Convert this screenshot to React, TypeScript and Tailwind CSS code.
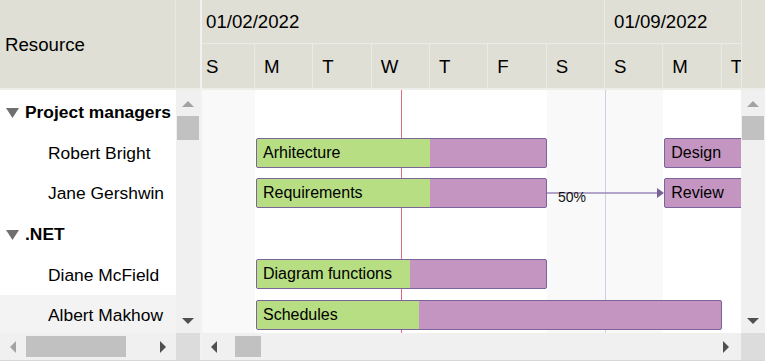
import React from "react";

const DAY = 58.33;
const ORIGIN = 53; // left offset of the first Monday inside the chart
const ROW = 40.6;

interface Task {
  name: string;
  row: number;
  start: number; // day index from first Monday
  days: number;
  progress: number;
}

const tasks: Task[] = [
  { name: "Arhitecture", row: 1, start: 0, days: 5, progress: 0.6 },
  { name: "Design", row: 1, start: 7, days: 5, progress: 0 },
  { name: "Requirements", row: 2, start: 0, days: 5, progress: 0.6 },
  { name: "Review", row: 2, start: 7, days: 5, progress: 0 },
  { name: "Diagram functions", row: 4, start: 0, days: 5, progress: 0.53 },
  { name: "Schedules", row: 5, start: 0, days: 8, progress: 0.35 },
];

const resources = [
  { name: "Project managers", group: true },
  { name: "Robert Bright" },
  { name: "Jane Gershwin" },
  { name: ".NET", group: true },
  { name: "Diane McField" },
  { name: "Albert Makhow", hover: true },
];

const days = [
  { d: "S", w: 53, weekend: true },
  { d: "M", w: DAY },
  { d: "T", w: DAY },
  { d: "W", w: DAY },
  { d: "T", w: DAY },
  { d: "F", w: DAY },
  { d: "S", w: DAY, weekend: true },
  { d: "S", w: DAY, weekend: true, weekStart: true },
  { d: "M", w: DAY },
  { d: "T", w: DAY },
];

function Tri({ dir, color }: { dir: "up" | "down" | "left" | "right"; color: string }) {
  const pts = {
    up: "0,8 6,2 12,8",
    down: "0,2 12,2 6,8",
    left: "8,0 8,12 2,6",
    right: "2,0 2,12 8,6",
  }[dir];
  const vertical = dir === "up" || dir === "down";
  return (
    <svg width={vertical ? 12 : 10} height={vertical ? 10 : 12} viewBox={vertical ? "0 0 12 10" : "0 0 10 12"}>
      <polygon points={pts} fill={color} />
    </svg>
  );
}

function VScroll() {
  return (
    <div className="w-[24px] bg-[#f0f0f0] flex flex-col items-center">
      <div className="h-[24px] flex items-center justify-center mt-[2px]">
        <Tri dir="up" color="#a3a3a3" />
      </div>
      <div className="w-[22px] h-[24px] bg-[#c1c1c1]" />
      <div className="flex-1" />
      <div className="h-[24px] flex items-center justify-center">
        <Tri dir="down" color="#505050" />
      </div>
    </div>
  );
}

export default function App() {
  return (
    <div
      className="w-[765px] h-[361px] flex bg-white overflow-hidden text-black border-b border-[#d8d8d8]"
      style={{ fontFamily: '"Liberation Sans", Arial, sans-serif' }}
    >
      {/* left grid */}
      <div className="w-[200px] flex flex-col">
        <div className="h-[90px] flex bg-[#dfdfd5] border-b-2 border-[#ededea]">
          <div className="w-[176px] flex items-center pl-[5px] text-[18.67px] pt-[2px] border-r border-[#e9e9e3]">
            Resource
          </div>
          <div className="flex-1" />
        </div>
        <div className="flex-1 flex min-h-0">
          <div className="w-[176px] flex flex-col pt-[2px] overflow-hidden">
            {resources.map((r, i) => (
              <div
                key={i}
                className={`h-[40.6px] shrink-0 flex items-center whitespace-nowrap text-[17.4px] ${
                  r.hover ? "bg-[#f3f3f3]" : ""
                } ${r.group ? "pl-[6px] font-bold" : "pl-[48px]"}`}
              >
                {r.group && (
                  <svg width="13" height="11" viewBox="0 0 13 11" className="mr-[6px] shrink-0">
                    <polygon points="0,1 13,1 6.5,11" fill="#6f6f6f" />
                  </svg>
                )}
                {r.name}
              </div>
            ))}
          </div>
          <VScroll />
        </div>
        <div className="h-[27px] flex">
          <div className="w-[176px] bg-[#f0f0f0] flex items-center">
            <div className="w-[26px] flex justify-center">
              <Tri dir="left" color="#a3a3a3" />
            </div>
            <div className="w-[100px] h-[21px] bg-[#c1c1c1]" />
            <div className="flex-1" />
            <div className="w-[26px] flex justify-center">
              <Tri dir="right" color="#505050" />
            </div>
          </div>
          <div className="flex-1 bg-[#dcdcdc]" />
        </div>
      </div>

      {/* splitter */}
      <div className="w-[2px] bg-[#f2f2f2]" />

      {/* chart */}
      <div className="flex-1 flex flex-col min-w-0">
        <div className="h-[90px] flex bg-[#dfdfd5] border-b-2 border-[#ededea]">
          <div className="w-[539px] flex flex-col overflow-hidden">
            <div className="h-[44px] flex border-b border-[#ebebe5]">
              <div className="w-[403px] shrink-0 pl-[4px] flex items-center text-[18.67px] pt-[1px] border-r border-[#ebebe5]">
                01/02/2022
              </div>
              <div className="flex-1 pl-[9px] flex items-center text-[18.67px] pt-[1px]">01/09/2022</div>
            </div>
            <div className="flex-1 flex">
              {days.map((d, i) => (
                <div
                  key={i}
                  style={{ width: d.w }}
                  className="shrink-0 flex items-center pl-[4px] text-[18.67px] border-r border-[#ebebe5] pt-[2px]"
                >
                  <span className={i === 0 ? "" : "pl-[5px]"}>{d.d}</span>
                </div>
              ))}
            </div>
          </div>
          <div className="flex-1 border-l border-[#ebebe5]" />
        </div>

        <div className="flex-1 flex min-h-0">
          <div className="w-[539px] relative overflow-hidden">
            {/* day backgrounds */}
            <div className="absolute inset-0 flex">
              {days.map((d, i) => (
                <div
                  key={i}
                  style={{ width: d.w }}
                  className={`shrink-0 h-full ${d.weekend ? "bg-[#f9f9f9]" : ""} ${
                    d.weekStart ? "border-l border-[#d3cfe3]" : ""
                  }`}
                />
              ))}
            </div>

            {/* dependency + today line */}
            <svg className="absolute left-0 top-0" width="539" height="243">
              <rect x="199" y="0" width="1" height="243" fill="#e2697f" />
              <line x1="345" y1="103" x2="456" y2="103" stroke="#9b88ba" strokeWidth="1.5" />
              <polygon points="455,98 462,103 455,108" fill="#7a6299" />
              <text x="356" y="112" fontSize="14" fill="#111" fontFamily="Liberation Sans, Arial, sans-serif">
                50%
              </text>
            </svg>

            {tasks.map((t) => {
              const left = ORIGIN + t.start * DAY + 1;
              const width = t.days * DAY - 1;
              const top = t.row * ROW + 7;
              return (
                <div
                  key={t.name}
                  className="absolute h-[30px] rounded-[2px] border border-[#7b639c] bg-[#c495c0] overflow-hidden"
                  style={{ left, width, top }}
                >
                  <div className="absolute left-0 top-0 bottom-0 bg-[#b7de83]" style={{ width: `${t.progress * 100}%` }} />
                  <div className="relative pl-[6px] leading-[28px] text-[16px] whitespace-nowrap">{t.name}</div>
                </div>
              );
            })}
          </div>
          <VScroll />
        </div>

        <div className="h-[27px] flex">
          <div className="w-[539px] bg-[#f0f0f0] flex items-center">
            <div className="w-[24px] flex justify-center">
              <Tri dir="left" color="#505050" />
            </div>
            <div className="w-[26px] h-[21px] bg-[#c1c1c1] ml-[9px]" />
            <div className="flex-1" />
            <div className="w-[30px] flex justify-center">
              <Tri dir="right" color="#505050" />
            </div>
          </div>
          <div className="flex-1 bg-[#dcdcdc]" />
        </div>
      </div>
    </div>
  );
}
